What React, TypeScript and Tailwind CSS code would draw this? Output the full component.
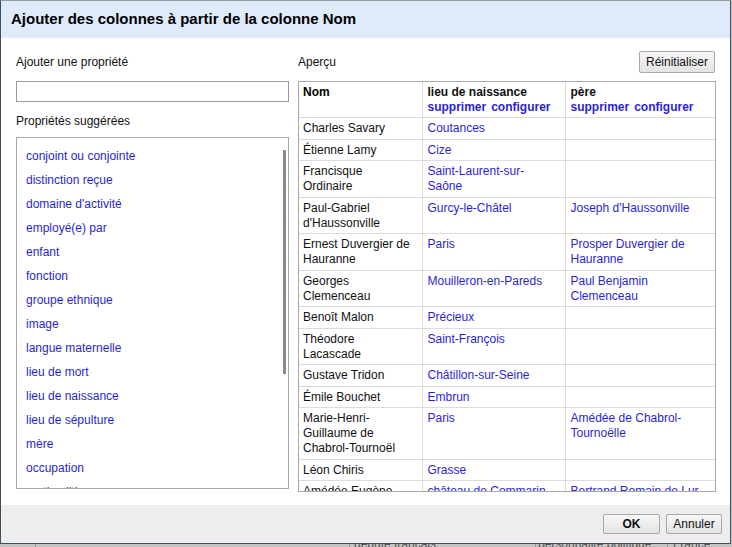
import React from "react";

const suggested = [
  "conjoint ou conjointe",
  "distinction reçue",
  "domaine d'activité",
  "employé(e) par",
  "enfant",
  "fonction",
  "groupe ethnique",
  "image",
  "langue maternelle",
  "lieu de mort",
  "lieu de naissance",
  "lieu de sépulture",
  "mère",
  "occupation",
  "parti politique",
];

const rows: [string, string, string][] = [
  ["Charles Savary", "Coutances", ""],
  ["Étienne Lamy", "Cize", ""],
  ["Francisque Ordinaire", "Saint-Laurent-sur-Saône", ""],
  ["Paul-Gabriel d'Haussonville", "Gurcy-le-Châtel", "Joseph d'Haussonville"],
  ["Ernest Duvergier de Hauranne", "Paris", "Prosper Duvergier de Hauranne"],
  ["Georges Clemenceau", "Mouilleron-en-Pareds", "Paul Benjamin Clemenceau"],
  ["Benoît Malon", "Précieux", ""],
  ["Théodore Lacascade", "Saint-François", ""],
  ["Gustave Tridon", "Châtillon-sur-Seine", ""],
  ["Émile Bouchet", "Embrun", ""],
  ["Marie-Henri-Guillaume de Chabrol-Tournoël", "Paris", "Amédée de Chabrol-Tournoëlle"],
  ["Léon Chiris", "Grasse", ""],
  ["Amédée Eugène Bertrand", "château de Commarin", "Bertrand Romain de Lur-Saluces"],
];

const btn =
  "border border-[#a8a8a8] rounded-[2px] bg-gradient-to-b from-[#f7f7f7] to-[#e3e3e3] text-[12px] text-[#111] leading-[14px]";

export default function App() {
  return (
    <div
      className="w-[732px] h-[547px] overflow-hidden bg-[#c4c4c4] flex flex-col"
      style={{ fontFamily: '"Liberation Sans", Arial, sans-serif' }}
    >
      <div className="flex">
        <div className="w-[731px] h-[544px] border-t border-t-[#9a9a9a] border-x border-b border-x-[#3e4e5e] border-b-[#3e4e5e] bg-white flex flex-col">
          <div className="h-[37px] bg-[#dfeafb] flex items-center pl-[10px] shrink-0">
            <span className="text-[15px] font-bold text-black">
              Ajouter des colonnes à partir de la colonne Nom
            </span>
          </div>
          <div className="flex-1 flex pt-[12px] overflow-hidden">
            {/* Left panel */}
            <div className="w-[273px] ml-[15px] flex flex-col">
              <div className="mt-[5px] text-[12px] leading-[15px] text-[#111]">
                Ajouter une propriété
              </div>
              <input className="mt-[11px] h-[21px] w-[273px] border border-[#9a9a9a] outline-none shrink-0" />
              <div className="mt-[12px] text-[12px] leading-[15px] text-[#111]">
                Propriétés suggérées
              </div>
              <div className="relative mt-[8px] h-[352px] border border-[#a8a8a8] overflow-hidden pt-[6px] pl-[9px] shrink-0">
                {suggested.map((s) => (
                  <div
                    key={s}
                    className="h-[24px] leading-[24px] text-[12px] text-[#2b1fd6] whitespace-nowrap"
                  >
                    {s}
                  </div>
                ))}
                <div className="absolute left-[266px] top-[12px] w-[3px] h-[224px] bg-[#8a8a8a]" />
              </div>
            </div>
            {/* Right panel */}
            <div className="ml-[9px] w-[418px] flex flex-col">
              <div className="flex items-start justify-between h-[31px] shrink-0">
                <span className="text-[12px] leading-[15px] text-[#111] mt-[5px]">Aperçu</span>
                <button className={`${btn} h-[22px] px-[6px] mt-[1px] mr-[1px]`}>
                  Réinitialiser
                </button>
              </div>
              <div className="h-[411px] border border-[#a8a8a8] overflow-hidden shrink-0">
                <table className="table-fixed border-collapse text-[12px] leading-[15px] w-[416px]">
                  <colgroup>
                    <col className="w-[123px]" />
                    <col className="w-[143px]" />
                    <col className="w-[150px]" />
                  </colgroup>
                  <thead>
                    <tr>
                      <th className="text-left align-top font-bold pt-[3px] pb-[2px] pl-[4px] border-r border-b border-[#dcdcdc] h-[35px]">
                        Nom
                      </th>
                      {["lieu de naissance", "père"].map((h, i) => (
                        <th
                          key={h}
                          className={`text-left align-top font-bold pt-[3px] pb-[2px] pl-[5px] border-b border-[#dcdcdc] ${
                            i === 0 ? "border-r" : ""
                          }`}
                        >
                          <div className="text-[#111]">{h}</div>
                          <div className="text-[#2b1fd6] whitespace-nowrap">
                            supprimer<span className="ml-[5px]">configurer</span>
                          </div>
                        </th>
                      ))}
                    </tr>
                  </thead>
                  <tbody>
                    {rows.map((r) => (
                      <tr key={r[0]}>
                        <td className="align-top pt-[3px] pb-[2.5px] pl-[4px] pr-[8px] border-r border-b border-[#dcdcdc] text-[#111]">
                          {r[0]}
                        </td>
                        <td className="align-top pt-[3px] pb-[2.5px] pl-[5px] pr-[8px] border-r border-b border-[#dcdcdc] text-[#2b1fd6]">
                          {r[1]}
                        </td>
                        <td className="align-top pt-[3px] pb-[2.5px] pl-[5px] pr-[8px] border-b border-[#dcdcdc] text-[#2b1fd6]">
                          {r[2]}
                        </td>
                      </tr>
                    ))}
                  </tbody>
                </table>
              </div>
            </div>
          </div>
          <div className="h-[38px] bg-[#ededed] shrink-0 flex items-center justify-end pr-[8px] gap-[6px]">
            <button className={`${btn} h-[20px] w-[57px] font-bold`}>OK</button>
            <button className={`${btn} h-[20px] w-[56px]`}>Annuler</button>
          </div>
        </div>
        <div className="w-[1px] bg-[#c4c4c4]" />
      </div>
      <div className="h-[3px] relative overflow-hidden text-[12px] text-[#555] leading-[12px]">
        <div className="absolute top-[-6px] left-[0px] w-[732px] flex">
          <div className="w-[36px] border-r border-[#999] h-[14px]" />
          <div className="w-[313px]" />
          <div className="w-[186px] border-l border-[#999] h-[14px] pl-[4px]">député français</div>
          <div className="w-[132px] border-l border-[#999] h-[14px] pl-[2px]">personnalité politique</div>
          <div className="border-l border-[#999] h-[14px] pl-[5px]">France</div>
        </div>
      </div>
    </div>
  );
}
